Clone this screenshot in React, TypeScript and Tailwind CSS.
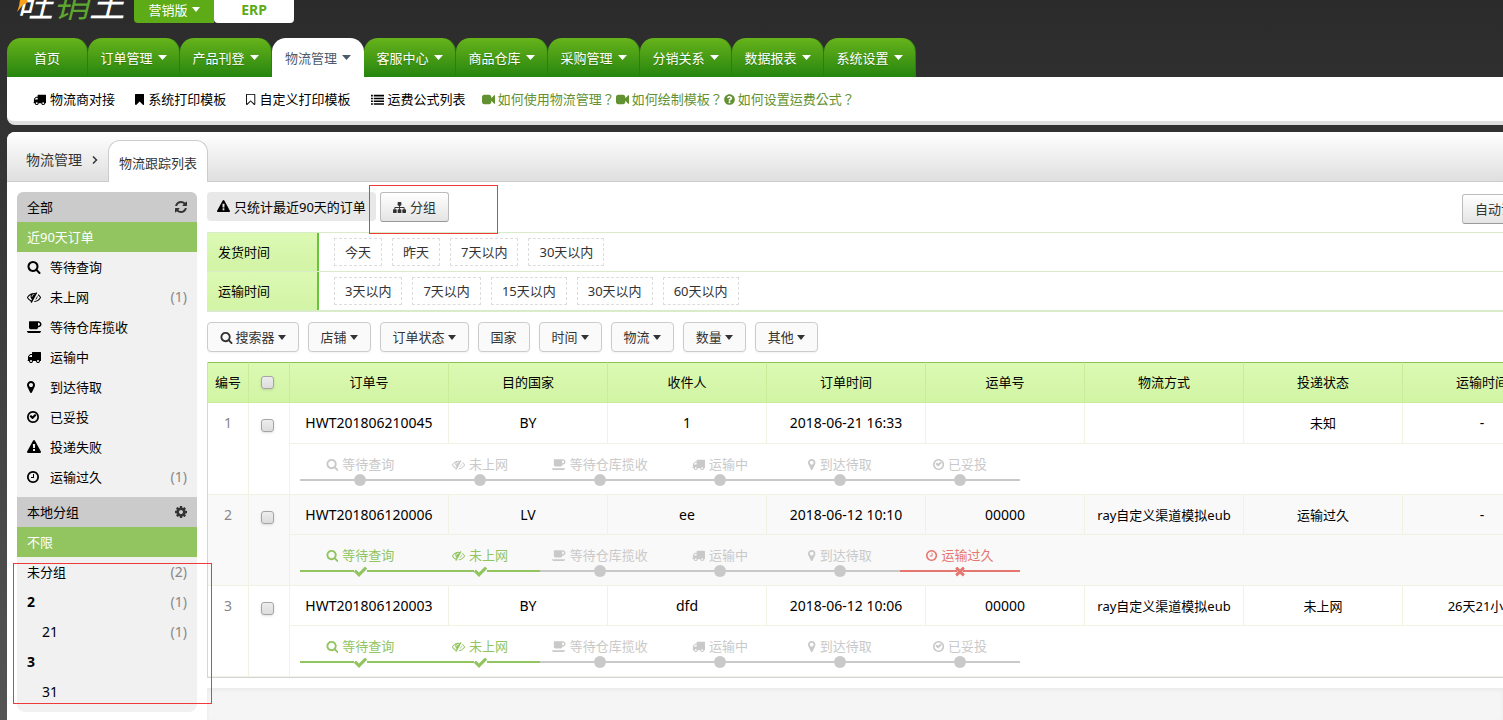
import React from 'react';
import { FaQuestionCircle } from 'react-icons/fa';

const ICONS = {
    search: 'M1216 832q0-185-131.5-316.5t-316.5-131.5-316.5 131.5-131.5 316.5 131.5 316.5 316.5 131.5 316.5-131.5 131.5-316.5zm512 832q0 52-38 90t-90 38q-54 0-90-38l-343-342q-179 124-399 124-143 0-273.5-55.5t-225-150-150-225-55.5-273.5 55.5-273.5 150-225 225-150 273.5-55.5 273.5 55.5 225 150 150 225 55.5 273.5q0 220-124 399l343 343q37 37 37 90z',
    eyeSlash: 'M555 1335l78-141q-87-63-136-159t-49-203q0-121 61-225-229 117-381 353 167 258 427 375zm389-759q0-20-14-34t-34-14q-125 0-214.5 89.5t-89.5 214.5q0 20 14 34t34 14 34-14 14-34q0-86 61-147t147-61q20 0 34-14t14-34zm363-191q0 7-1 9-106 189-316 567t-315 566l-49 89q-10 16-28 16-12 0-134-70-16-10-16-28 0-12 44-87-143-65-263.5-173t-208.5-245q-20-31-20-69t20-69q153-235 380-371t496-136q89 0 180 17l54-97q10-16 28-16 5 0 18 6t31 15.5 33 18.5 31.5 18.5 19.5 11.5q16 10 16 27zm37 447q0 139-79 253.5t-209 164.5l280-502q8 45 8 84zm448 128q0 35-20 69-39 64-109 145-150 172-347.5 267t-419.5 95l74-132q212-18 392.5-137t301.5-307q-115-179-282-294l63-112q95 64 182.5 153t144.5 184q20 34 20 69z',
    coffee: 'M1664 544q0-80-56-136t-136-56h-64v384h64q80 0 136-56t56-136zm-1664 864h1792q0 106-75 181t-181 75h-1280q-106 0-181-75t-75-181zm1856-864q0 159-112.5 271.5t-271.5 112.5h-64v32q0 92-66 158t-158 66h-704q-92 0-158-66t-66-158v-736q0-26 19-45t45-19h1152q159 0 271.5 112.5t112.5 271.5z',
    truck: 'M640 1408q0-52-38-90t-90-38-90 38-38 90 38 90 90 38 90-38 38-90zm-384-512h384v-256h-158q-13 0-22 9l-195 195q-9 9-9 22v30zm1280 512q0-52-38-90t-90-38-90 38-38 90 38 90 90 38 90-38 38-90zm256-1088v1024q0 15-4 26.5t-13.5 18.5-16.5 11.5-23.5 6-22.5 2-25.5 0-22.5-.5q0 106-75 181t-181 75-181-75-75-181h-384q0 106-75 181t-181 75-181-75-75-181h-64q-3 0-22.5.5t-25.5 0-22.5-2-23.5-6-16.5-11.5-13.5-18.5-4-26.5q0-26 19-45t45-19v-320q0-8-.5-35t0-38 2.5-34.5 6.5-37 14-30.5 22.5-30l198-198q19-19 50.5-32t58.5-13h160v-192q0-26 19-45t45-19h1024q26 0 45 19t19 45z',
    marker: 'M768 640q0-106-75-181t-181-75-181 75-75 181 75 181 181 75 181-75 75-181zm256 0q0 109-33 179l-364 774q-16 33-47.5 52t-67.5 19-67.5-19-46.5-52l-365-774q-33-70-33-179 0-212 150-362t362-150 362 150 150 362z',
    clock: 'M896 544v448q0 14-9 23t-23 9h-320q-14 0-23-9t-9-23v-64q0-14 9-23t23-9h224v-352q0-14 9-23t23-9h64q14 0 23 9t9 23zm416 352q0-148-73-273t-198-198-273-73-273 73-198 198-73 273 73 273 198 198 273 73 273-73 198-198 73-273zm224 0q0 209-103 385.5t-279.5 279.5-385.5 103-385.5-103-279.5-279.5-103-385.5 103-385.5 279.5-279.5 385.5-103 385.5 103 279.5 279.5 103 385.5z',
    checkCircle: 'M1171 723l-422 422q-19 19-45 19t-45-19l-294-294q-19-19-19-45t19-45l102-102q19-19 45-19t45 19l147 147 275-275q19-19 45-19t45 19l102 102q19 19 19 45t-19 45zm141 173q0-148-73-273t-198-198-273-73-273 73-198 198-73 273 73 273 198 198 273 73 273-73 198-198 73-273zm224 0q0 209-103 385.5t-279.5 279.5-385.5 103-385.5-103-279.5-279.5-103-385.5 103-385.5 279.5-279.5 385.5-103 385.5 103 279.5 279.5 103 385.5z',
    warning: 'M1024 1375v-190q0-14-9.5-23.5t-22.5-9.5h-192q-13 0-22.5 9.5t-9.5 23.5v190q0 14 9.5 23.5t22.5 9.5h192q13 0 22.5-9.5t9.5-23.5zm-2-374l18-459q0-12-10-19-13-11-24-11h-220q-11 0-24 11-10 7-10 21l17 457q0 10 10 16.5t24 6.5h185q14 0 23.5-6.5t10.5-16.5zm-14-934l768 1408q35 63-2 126-17 29-46.5 46t-63.5 17h-1536q-34 0-63.5-17t-46.5-46q-37-63-2-126l768-1408q17-31 47-49t65-18 65 18 47 49z',
    bookmark: 'M1164 128q23 0 44 9 33 13 52.5 41t19.5 62v1289q0 34-19.5 62t-52.5 41q-19 8-44 8-48 0-83-32l-441-424-441 424q-36 33-83 33-23 0-44-9-33-13-52.5-41t-19.5-62v-1289q0-34 19.5-62t52.5-41q21-9 44-9h1048z',
    bookmarkOutline: 'M1152 256h-1024v1242l423-406 89-85 89 85 423 406v-1242zm12-128q23 0 44 9 33 13 52.5 41t19.5 62v1289q0 34-19.5 62t-52.5 41q-19 8-44 8-48 0-83-32l-441-424-441 424q-36 33-83 33-23 0-44-9-33-13-52.5-41t-19.5-62v-1289q0-34 19.5-62t52.5-41q21-9 44-9h1048z',
    list: 'M0 256h256v224h-256zm384 0h1408v224h-1408zm-384 384h256v224h-256zm384 0h1408v224h-1408zm-384 384h256v224h-256zm384 0h1408v224h-1408zm-384 384h256v224h-256zm384 0h1408v224h-1408z',
    video: 'M1792 352v1088q0 42-39 59-13 5-25 5-27 0-45-19l-403-403v166q0 119-84.5 203.5t-203.5 84.5h-704q-119 0-203.5-84.5t-84.5-203.5v-704q0-119 84.5-203.5t203.5-84.5h704q119 0 203.5 84.5t84.5 203.5v165l403-402q18-19 45-19 12 0 25 5 39 17 39 59z',
    check: 'M1671 566q0 40-28 68l-724 724-136 136q-28 28-68 28t-68-28l-136-136-362-362q-28-28-28-68t28-68l136-136q28-28 68-28t68 28l294 295 656-657q28-28 68-28t68 28l136 136q28 28 28 68z',
    times: 'M1490 1322q0 40-28 68l-136 136q-28 28-68 28t-68-28l-294-294-294 294q-28 28-68 28t-68-28l-136-136q-28-28-28-68t28-68l294-294-294-294q-28-28-28-68t28-68l136-136q28-28 68-28t68 28l294 294 294-294q28-28 68-28t68 28l136 136q28 28 28 68t-28 68l-294 294 294 294q28 28 28 68z',
    cog: 'M1024 896q0-106-75-181t-181-75-181 75-75 181 75 181 181 75 181-75 75-181zm512-109v222q0 12-8 23t-20 13l-185 28q-19 54-39 91 35 50 107 138 10 12 10 25t-9 23q-27 37-99 108t-94 71q-12 0-26-9l-138-108q-44 23-91 38-16 136-29 186-7 28-36 28h-222q-14 0-24.5-8.5t-11.5-21.5l-28-184q-49-16-90-37l-141 107q-10 9-25 9-14 0-25-11-126-114-165-168-7-10-7-23 0-12 8-23 15-21 51-66.5t54-70.5q-27-50-41-99l-183-27q-13-2-21-12.5t-8-23.5v-222q0-12 8-23t19-13l186-28q14-46 39-92-40-57-107-138-10-12-10-24 0-10 9-23 26-36 98.5-107.5t94.5-71.5q13 0 26 10l138 107q44-23 91-38 16-136 29-186 7-28 36-28h222q14 0 24.5 8.5t11.5 21.5l28 184q49 16 90 37l142-107q9-9 24-9 13 0 25 10 129 119 165 170 7 8 7 22 0 12-8 23-15 21-51 66.5t-54 70.5q26 50 41 98l183 28q13 2 21 12.5t8 23.5z',
    refresh: 'M1511 1056q0 5-1 7-64 268-268 434.5t-478 166.5q-146 0-282.5-55t-243.5-157l-129 129q-19 19-45 19t-45-19-19-45v-448q0-26 19-45t45-19h448q26 0 45 19t19 45-19 45l-137 137q71 66 161 102t187 36q134 0 250-65t186-179q11-17 53-117 8-23 30-23h192q13 0 22.5 9.5t9.5 22.5zm25-800v448q0 26-19 45t-45 19h-448q-26 0-45-19t-19-45 19-45l138-138q-148-137-349-137-134 0-250 65t-186 179q-11 17-53 117-8 23-30 23h-199q-13 0-22.5-9.5t-9.5-22.5v-7q65-268 270-434.5t480-166.5q146 0 284 55.5t245 156.5l130-129q19-19 45-19t45 19 19 45z',
    sitemap: 'M1792 1248v320q0 40-28 68t-68 28h-320q-40 0-68-28t-28-68v-320q0-40 28-68t68-28h96v-192h-512v192h96q40 0 68 28t28 68v320q0 40-28 68t-68 28h-320q-40 0-68-28t-28-68v-320q0-40 28-68t68-28h96v-192h-512v192h96q40 0 68 28t28 68v320q0 40-28 68t-68 28h-320q-40 0-68-28t-28-68v-320q0-40 28-68t68-28h96v-192q0-52 38-90t90-38h512v-192h-96q-40 0-68-28t-28-68v-320q0-40 28-68t68-28h320q40 0 68 28t28 68v320q0 40-28 68t-68 28h-96v192h512q52 0 90 38t38 90v192h96q40 0 68 28t28 68z',
};

type IconName = keyof typeof ICONS;

// Glyph advance widths, in the same units as the paths
const WIDTHS: Partial<Record<IconName, number>> = {
    search: 1728,
    coffee: 1856,
    marker: 1024,
    clock: 1536,
    checkCircle: 1536,
    bookmark: 1280,
    bookmarkOutline: 1280,
    cog: 1536,
    refresh: 1536,
};

const Icon: React.FC<{ name: IconName; className?: string }> = ({ name, className = 'h-[13px]' }) => (
    <svg viewBox={`0 0 ${WIDTHS[name] ?? 1792} 1792`} className={`${className} w-auto shrink-0 fill-current`} aria-hidden="true">
        <path d={ICONS[name]} />
    </svg>
);

const Caret: React.FC<{ className?: string }> = ({ className = 'w-2' }) => (
    <svg viewBox="0 0 8 5" preserveAspectRatio="none" className={`${className} h-[5px] shrink-0 fill-current`} aria-hidden="true">
        <path d="M0 0h8l-4 5z" />
    </svg>
);

const NAV = ['首页', '订单管理', '产品刊登', '物流管理', '客服中心', '商品仓库', '采购管理', '分销关系', '数据报表', '系统设置'];

const SUB_NAV: { icon: IconName; label: string }[] = [
    { icon: 'truck', label: '物流商对接' },
    { icon: 'bookmark', label: '系统打印模板' },
    { icon: 'bookmarkOutline', label: '自定义打印模板' },
    { icon: 'list', label: '运费公式列表' },
];

const STATES: { icon: IconName; label: string; count?: number }[] = [
    { icon: 'search', label: '等待查询' },
    { icon: 'eyeSlash', label: '未上网', count: 1 },
    { icon: 'coffee', label: '等待仓库揽收' },
    { icon: 'truck', label: '运输中' },
    { icon: 'marker', label: '到达待取' },
    { icon: 'checkCircle', label: '已妥投' },
    { icon: 'warning', label: '投递失败' },
    { icon: 'clock', label: '运输过久', count: 1 },
];

const GROUPS: { label: string; count?: number; style: string }[] = [
    { label: '未分组', count: 2, style: '' },
    { label: '2', count: 1, style: 'text-sm font-bold' },
    { label: '21', count: 1, style: 'pl-[15px] text-sm' },
    { label: '3', style: 'text-sm font-bold' },
    { label: '31', style: 'pl-[15px] text-sm' },
];

const TIME_FILTERS = [
    { label: '发货时间', options: ['今天', '昨天', '7天以内', '30天以内'] },
    { label: '运输时间', options: ['3天以内', '7天以内', '15天以内', '30天以内', '60天以内'] },
];

const SEARCH_BUTTONS: { label: string; icon?: IconName; plain?: boolean }[] = [
    { label: '搜索器', icon: 'search' },
    { label: '店铺' },
    { label: '订单状态' },
    { label: '国家', plain: true },
    { label: '时间' },
    { label: '物流' },
    { label: '数量' },
    { label: '其他' },
];

const COLUMNS = ['订单号', '目的国家', '收件人', '订单时间', '运单号', '物流方式', '投递状态', '运输时间'];

type Order = { cells: string[]; done: number; failed?: boolean };

const ORDERS: Order[] = [
    { cells: ['HWT201806210045', 'BY', '1', '2018-06-21 16:33', '', '', '未知', '-'], done: 0 },
    { cells: ['HWT201806120006', 'LV', 'ee', '2018-06-12 10:10', '00000', 'ray自定义渠道模拟eub', '运输过久', '-'], done: 2, failed: true },
    { cells: ['HWT201806120003', 'BY', 'dfd', '2018-06-12 10:06', '00000', 'ray自定义渠道模拟eub', '未上网', '26天21小时'], done: 2 },
];

const hasHan = (text: string) => /[\u4e00-\u9fff]/.test(text);

const Checkbox: React.FC<{ label: string }> = ({ label }) => (
    <input
        type="checkbox"
        aria-label={label}
        className="block size-[13px] mx-auto appearance-none rounded-[3px] border border-[#a5a5a5] bg-linear-to-b from-[#ededed] to-[#dcdcdc] shadow-sm checked:bg-[#92c55f]"
    />
);

const TopBar: React.FC = () => (
    <header className="flex h-[38px] items-start pl-2.5">
        <a href="#home" className="relative flex h-6 w-[117px] items-end overflow-hidden text-[36px] leading-[40px] italic text-white">
            <span className="whitespace-nowrap">
                旺<span className="text-[#5ea52f]">销</span>王
            </span>
            <svg viewBox="0 0 12 12" className="absolute left-0 top-0 h-3 w-3 fill-[#f9a11b]" aria-hidden="true">
                <path d="M3 0h7l1 2-5 3-6 7 2-6z" />
            </svg>
        </a>
        <button type="button" className="flex h-[23px] w-20 items-center justify-center gap-1 rounded-bl bg-[#5dab17] pb-1 text-white">
            营销版 <Caret />
        </button>
        <button type="button" className="h-[23px] w-20 rounded-b bg-white pb-1 text-sm font-bold leading-5 text-[#5dab17]">
            ERP
        </button>
    </header>
);

const MainNav: React.FC = () => (
    <nav>
        <ul className="flex">
            {NAV.map((label, i) => {
                const active = label === '物流管理';
                return (
                    <li key={label}>
                        <a
                            href={`#nav-${i}`}
                            className={`flex h-[39px] items-center justify-center gap-[5px] rounded-t-[14px] ${i === 0 ? 'w-[81px]' : 'w-[92px]'} ${
                                active
                                    ? 'bg-white text-[#4d5a6b]'
                                    : 'border-r border-[#2d7d14] bg-linear-to-b from-[#66b31b] to-[#23850f] text-white text-shadow-xs'
                            }`}
                        >
                            {label}
                            {i > 0 && <Caret className="w-[9px]" />}
                        </a>
                    </li>
                );
            })}
        </ul>
        <div className="flex h-12 items-center rounded-bl-lg border-b-4 border-[#e0e0e0] bg-white pl-[26px]">
            {SUB_NAV.map((item) => (
                <a key={item.label} href={`#${item.icon}`} className="mr-5 flex items-center gap-1 text-black">
                    <Icon name={item.icon} />
                    {item.label}
                </a>
            ))}
            <div className="-ml-1 flex gap-px font-['Noto_Sans','Noto_Sans_CJK_TC',sans-serif] text-[#619130]">
                <a href="#help-1" className="flex items-center gap-[3px]">
                    <Icon name="video" />
                    如何使用物流管理？
                </a>
                <a href="#help-2" className="flex items-center gap-[3px]">
                    <Icon name="video" />
                    如何绘制模板？
                </a>
                <a href="#help-3" className="flex items-center gap-[3px]">
                    <FaQuestionCircle className="size-[11px]" />
                    如何设置运费公式？
                </a>
            </div>
        </div>
    </nav>
);

const Sidebar: React.FC = () => (
    <aside className="w-[180px] shrink-0">
        <div className="rounded-lg bg-[#f1f1f1] pb-[5px] text-black">
            <div className="flex h-[30px] items-center justify-between rounded-t-md bg-[#cbcbcb] px-2.5">
                全部
                <button type="button" aria-label="刷新" className="text-[#333]">
                    <Icon name="refresh" className="h-[14px]" />
                </button>
            </div>
            <a href="#recent" className="flex h-[30px] items-center bg-[#92c55f] px-2.5 text-white">近90天订单</a>
            <ul className="pb-[5px]">
                {STATES.map((item) => (
                    <li key={item.label}>
                        <a href={`#${item.icon}`} className="flex h-[30px] items-center px-2.5">
                            <span className="w-[23px]">
                                <Icon name={item.icon} className="h-[14px]" />
                            </span>
                            {item.label}
                            {item.count && <span className="ml-auto text-sm text-[#888]">({item.count})</span>}
                        </a>
                    </li>
                ))}
            </ul>
            <div className="flex h-[30px] items-center justify-between bg-[#cbcbcb] px-2.5">
                本地分组
                <button type="button" aria-label="设置" className="text-[#333]">
                    <Icon name="cog" className="h-[14px]" />
                </button>
            </div>
            <a href="#any" className="flex h-[30px] items-center bg-[#92c55f] px-2.5 text-white">不限</a>
            <ul>
                {GROUPS.map((group) => (
                    <li key={group.label}>
                        <a href={`#group-${group.label}`} className="flex h-[30px] items-center px-2.5">
                            <span className={group.style}>{group.label}</span>
                            {group.count && <span className="ml-auto text-sm text-[#888]">({group.count})</span>}
                        </a>
                    </li>
                ))}
            </ul>
        </div>
    </aside>
);

const TimeFilters: React.FC = () => (
    <div className="mt-2.5 border-t border-b-2 border-[#d9ebc8]">
        {TIME_FILTERS.map((row, i) => (
            <div key={row.label} className={`flex ${i > 0 ? 'border-t border-[#d9ebc8]' : ''}`}>
                <div className="flex h-[38px] w-28 items-center border-r-2 border-[#6ac33c] bg-linear-to-b from-[#dcf9b4] to-[#d2f4a5] pl-[11px] text-black">
                    {row.label}
                </div>
                <div className="flex items-center gap-2.5 pl-[15px]">
                    {row.options.map((option) => (
                        <button key={option} type="button" className="h-7 border border-dashed border-[#ddd] px-2.5">
                            {option}
                        </button>
                    ))}
                </div>
            </div>
        ))}
    </div>
);

const Timeline: React.FC<{ order: Order }> = ({ order }) => (
    <ol className="flex pl-2.5">
        {STATES.slice(0, 6).map((state, i) => {
            const failed = order.failed && i === 5;
            const done = i < order.done;
            const color = failed ? 'text-[#e57771]' : done ? 'text-[#92c55f]' : 'text-[#c9c9c9]';
            return (
                <li key={state.label} className={`flex w-[120px] flex-col items-center ${color}`}>
                    <span className="flex h-5 items-center gap-1">
                        <Icon name={failed ? 'clock' : state.icon} />
                        {failed ? '运输过久' : state.label}
                    </span>
                    <span className="flex h-3 w-full items-center">
                        <span className="h-0.5 grow bg-current" />
                        {failed && <Icon name="times" className="-mx-1 h-[14px]" />}
                        {done && <Icon name="check" className="-mx-px h-[15px]" />}
                        {!failed && !done && <span className="size-3 rounded-full bg-current" />}
                        <span className="h-0.5 grow bg-current" />
                    </span>
                </li>
            );
        })}
    </ol>
);

const OrderTable: React.FC = () => (
    <table className="mt-2.5 w-full table-fixed border-separate border-spacing-0 border-b border-l border-[#d5d5d5] text-center text-black">
        <colgroup>
            <col className="w-[41px]" />
            <col className="w-[41px]" />
            {COLUMNS.map((column) => (
                <col key={column} />
            ))}
        </colgroup>
        <thead>
            <tr className="h-[41px] bg-linear-to-b from-[#dcfab3] to-[#d1f4a4]">
                <th className="border-t border-r border-b border-t-[#8cc152] border-r-[#c9ec9b] border-b-[#c9ec9b] p-0 pb-0.5 font-normal">编号</th>
                <th className="border-t border-r border-b border-t-[#8cc152] border-r-[#c9ec9b] border-b-[#c9ec9b] p-0 pr-1">
                    <Checkbox label="全选" />
                </th>
                {COLUMNS.map((column) => (
                    <th key={column} className="border-t border-r border-b border-t-[#8cc152] border-r-[#c9ec9b] border-b-[#c9ec9b] p-0 pb-0.5 font-normal">
                        {column}
                    </th>
                ))}
            </tr>
        </thead>
        {ORDERS.map((order, i) => (
            <tbody key={order.cells[0]} className={i % 2 ? 'bg-[#f9f9f9]' : 'bg-white'}>
                <tr className={i === 0 ? 'h-[41px]' : 'h-10'}>
                    <td rowSpan={2} className="border-r border-b border-[#eef3e2] p-0 pt-2.5 align-top text-sm text-[#888]">{i + 1}</td>
                    <td rowSpan={2} className="border-r border-b border-[#eef3e2] p-0 pt-4 pr-1 align-top">
                        <Checkbox label={`选择订单 ${order.cells[0]}`} />
                    </td>
                    {order.cells.map((cell, j) => (
                        <td
                            key={COLUMNS[j]}
                            className={`whitespace-nowrap border-r border-b border-[#eef3e2] p-0 ${hasHan(cell) ? 'text-[13px]' : 'text-sm'}`}
                        >
                            {cell}
                        </td>
                    ))}
                </tr>
                <tr className="h-[51px]">
                    <td colSpan={8} className="border-r border-b border-[#eef3e2] p-0 pt-2.5 align-top">
                        <Timeline order={order} />
                    </td>
                </tr>
            </tbody>
        ))}
    </table>
);

export default function App() {
    return (
        <div className="relative flex min-h-screen flex-col overflow-hidden bg-linear-to-b from-[#2b2b2b] to-[#555] pl-[7px] font-['Noto_Sans','Noto_Sans_CJK_SC',sans-serif] text-[13px] leading-5 text-[#333]">
            <TopBar />
            <MainNav />
            <main className="mt-[7px] flex grow flex-col rounded-tl-lg bg-white">
                <div className="flex h-[50px] items-end rounded-tl-lg border-b border-[#ccc] bg-linear-to-b from-white to-[#dfdfdf] pl-[19px]">
                    <a href="#logistics" className="mb-[11px] flex w-[82px] items-center gap-2.5 text-sm">
                        物流管理
                        <svg viewBox="0 0 6 8" className="h-2 w-1.5 fill-none stroke-[#333] stroke-[1.5]" aria-hidden="true">
                            <path d="M1 0.5l3.5 3.5-3.5 3.5" />
                        </svg>
                    </a>
                    <h1 className="-mb-px flex h-[42px] items-center rounded-t-xl border border-b-0 border-[#ccc] bg-white px-2.5 pt-0.5">
                        物流跟踪列表
                    </h1>
                </div>
                <div className="flex grow gap-2.5 pl-2.5">
                    <div className="pt-2.5 pb-2">
                        <Sidebar />
                    </div>
                    <div className="flex min-w-0 grow flex-col overflow-hidden pt-2.5">
                        <div className="min-w-[1355px]">
                            <div className="flex h-[30px] items-start gap-1">
                                <p className="flex h-[29px] items-center gap-1 rounded bg-[#e8e8e8] px-2.5 text-black">
                                    <Icon name="warning" />
                                    只统计最近90天的订单
                                </p>
                                <button
                                    type="button"
                                    className="flex h-[30px] items-center gap-1 rounded-[3px] border border-[#bbb] border-b-[#999] bg-linear-to-b from-white to-[#e4e4e4] px-3"
                                >
                                    <Icon name="sitemap" />
                                    分组
                                </button>
                                <button
                                    type="button"
                                    className="mt-0.5 ml-auto h-[30px] w-[100px] overflow-hidden whitespace-nowrap rounded-[3px] border border-[#bbb] border-b-[#999] bg-linear-to-b from-white to-[#e4e4e4] pl-3 text-left"
                                >
                                    自动识别物流
                                </button>
                            </div>
                            <TimeFilters />
                            <div className="mt-2.5 flex gap-[9px]">
                                {SEARCH_BUTTONS.map((button) => (
                                    <button
                                        key={button.label}
                                        type="button"
                                        className="flex h-[30px] items-center gap-[3px] rounded border border-[#ccc] bg-[#fafafa] px-3 shadow-xs"
                                    >
                                        {button.icon && <Icon name={button.icon} />}
                                        {button.label}
                                        {!button.plain && <Caret />}
                                    </button>
                                ))}
                            </div>
                            <OrderTable />
                        </div>
                        <div className="mt-2.5 grow bg-[#f5f5f5] inset-shadow-sm" />
                    </div>
                </div>
            </main>

            {/* Highlight frames over the group button and the local groups */}
            <div className="pointer-events-none absolute left-[369px] top-[185px] h-[49px] w-[129px] border border-[#f03a3a]" />
            <div className="pointer-events-none absolute left-[13px] top-[563px] h-[141px] w-[199px] border border-[#f03a3a]" />
        </div>
    );
}
